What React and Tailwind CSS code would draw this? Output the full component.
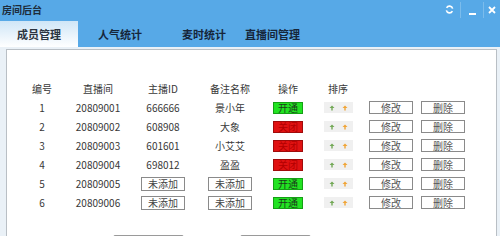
const rows = [
  { no: 1, room: "20809001", id: "666666", name: "景小年", on: true },
  { no: 2, room: "20809002", id: "608908", name: "大象", on: false },
  { no: 3, room: "20809003", id: "601601", name: "小艾艾", on: false },
  { no: 4, room: "20809004", id: "698012", name: "盈盈", on: false },
  { no: 5, room: "20809005", id: null, name: null, on: true },
  { no: 6, room: "20809006", id: null, name: null, on: true },
];

const tabs = ["成员管理", "人气统计", "麦时统计", "直播间管理"];

function Empty() {
  return (
    <span className="inline-flex h-[14px] w-[44px] items-center justify-center border border-[#8a8a8a] bg-white text-[10px] leading-none text-[#444]">
      未添加
    </span>
  );
}

function Toggle({ on }) {
  return on ? (
    <span className="inline-flex h-[12px] w-[30px] items-center justify-center border border-[#14a014] bg-[#22e322] text-[10px] leading-none text-[#1b3b1b]">
      开通
    </span>
  ) : (
    <span className="inline-flex h-[12px] w-[30px] items-center justify-center border border-[#a00b0b] bg-[#e01212] text-[10px] leading-none text-[#b30000]">
      关闭
    </span>
  );
}

function Sort() {
  return (
    <span className="inline-flex h-[11px] w-[29px] items-center justify-center gap-[7px] bg-[#f0f0f0]">
      <svg width="6" height="6" viewBox="0 0 6 6">
        <path d="M3 0.5 L5.5 3 L3.7 3 L3.7 5.5 L2.3 5.5 L2.3 3 L0.5 3 Z" fill="#72a856" />
      </svg>
      <svg width="6" height="6" viewBox="0 0 6 6">
        <path d="M3 0.5 L5.5 3 L3.7 3 L3.7 5.5 L2.3 5.5 L2.3 3 L0.5 3 Z" fill="#f0a436" />
      </svg>
    </span>
  );
}

function Btn({ children }) {
  return (
    <span className="inline-flex h-[13px] w-[44px] items-center justify-center border border-[#8a8a8a] bg-white text-[10px] leading-none text-[#555]">
      {children}
    </span>
  );
}

function Row({ cells }) {
  const widths = ["w-[40px]", "w-[72px]", "w-[58px]", "w-[76px]", "w-[40px]", "w-[60px]", "w-[46px]", "w-[58px]"];
  return (
    <div className="flex h-[19px] items-center text-[10px] text-[#383838]">
      {cells.map((c, i) => (
        <div key={i} className={`${widths[i]} flex shrink-0 justify-center`}>
          {c}
        </div>
      ))}
    </div>
  );
}

export default function App() {
  return (
    <div
      className="h-[236px] w-[500px] overflow-hidden bg-[#eaf1f7]"
      style={{ fontFamily: '"Noto Sans CJK SC", "Noto Sans", sans-serif' }}
    >
      <div className="h-[47px] bg-[#57a9e7]">
        <div className="flex h-[21px] items-start justify-between">
          <span className="pl-[2px] pt-[2px] text-[10px] font-bold text-[#1d2c3a]">房间后台</span>
          <div className="flex h-[19px] items-center">
            <div className="flex h-full w-[22px] items-center justify-center">
              <svg width="9" height="9" viewBox="0 0 10 10" fill="none" stroke="white" strokeWidth="1.8">
                <path d="M8.5 4 A3.6 3.6 0 0 0 1.8 3.2" />
                <path d="M1.5 6 A3.6 3.6 0 0 0 8.2 6.8" />
              </svg>
            </div>
            <div className="h-[16px] w-px bg-[#7bbcec]" />
            <div className="flex h-full w-[22px] items-end justify-center pb-[4px]">
              <span className="h-[2px] w-[7px] bg-white" />
            </div>
            <div className="h-[16px] w-px bg-[#7bbcec]" />
            <div className="flex h-full w-[16px] items-center justify-center">
              <svg width="8" height="8" viewBox="0 0 8 8" stroke="white" strokeWidth="1.8">
                <path d="M1 1 L7 7 M7 1 L1 7" />
              </svg>
            </div>
          </div>
        </div>
        <div className="flex h-[26px] items-end">
          {tabs.map((t, i) =>
            i === 0 ? (
              <div
                key={t}
                className="flex h-[26px] w-[78px] items-center justify-center bg-gradient-to-b from-[#cfe6f7] to-white text-[11px] font-bold text-[#2a3440]"
              >
                {t}
              </div>
            ) : (
              <div
                key={t}
                className={`flex h-[26px] items-center text-[11px] font-bold text-[#16263a] ${
                  i === 1 ? "ml-[20px] w-[84px]" : i === 2 ? "w-[63px]" : ""
                }`}
              >
                {t}
              </div>
            )
          )}
        </div>
      </div>
      <div className="ml-[6px] mr-[3px] mt-[2px] h-[200px] border border-[#b9bfc5] bg-white">
        <div className="pl-[15px] pt-[29px]">
          <Row cells={["编号", "直播间", "主播ID", "备注名称", "操作", "排序", "", ""]} />
          {rows.map((r) => (
            <Row
              key={r.no}
              cells={[
                r.no,
                r.room,
                r.id ?? <Empty />,
                r.name ?? <Empty />,
                <Toggle on={r.on} />,
                <Sort />,
                <Btn>修改</Btn>,
                <Btn>删除</Btn>,
              ]}
            />
          ))}
        </div>
        <div className="mt-[23px] flex gap-[56px] pl-[106px]">
          <span className="h-[20px] w-[71px] rounded-[2px] border border-[#9a9a9a] bg-[#f4f4f4]" />
          <span className="h-[20px] w-[71px] rounded-[2px] border border-[#9a9a9a] bg-[#f4f4f4]" />
        </div>
      </div>
    </div>
  );
}
